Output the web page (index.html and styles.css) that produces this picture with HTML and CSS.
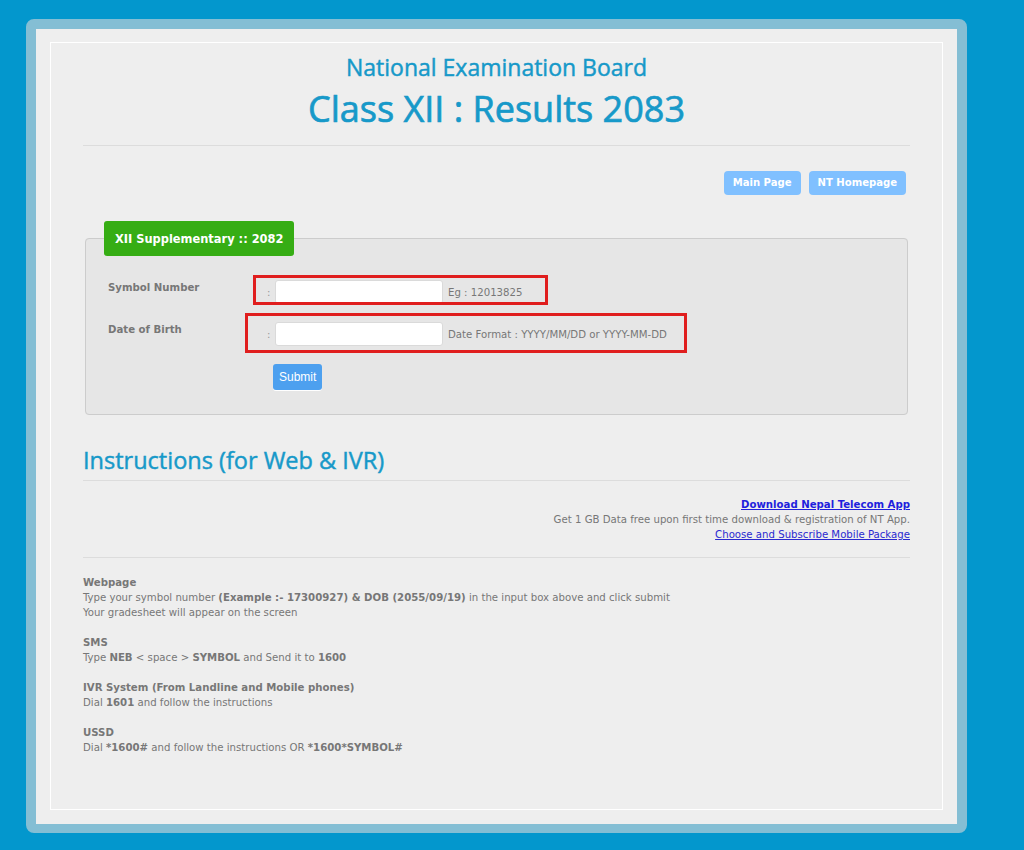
FILE: index.html
```html
<!DOCTYPE html>
<html lang="en">
<head>
<meta charset="utf-8">
<title>NEB Class XII Results 2083</title>
<link rel="stylesheet" href="styles.css">
</head>
<body>
<div class="frame">
  <div class="panel">
    <div class="sheet">
      <header class="masthead">
        <h2 class="masthead__org">National Examination Board</h2>
        <h1 class="masthead__title">Class XII : Results 2083</h1>
      </header>
      <hr class="rule rule--head">
      <nav class="links">
        <a class="pill" href="#">Main Page</a>
        <a class="pill" href="#">NT Homepage</a>
      </nav>
      <form class="search" onsubmit="return false">
        <fieldset class="search__box">
          <legend class="search__legend">XII Supplementary :: 2082</legend>
          <div class="field field--first">
            <label class="field__label" for="symbol">Symbol Number</label>
            <span class="field__colon">:</span>
            <input class="field__input" id="symbol" type="text">
            <span class="field__hint">Eg : 12013825</span>
            <span class="mark mark--symbol"></span>
          </div>
          <div class="field">
            <label class="field__label" for="dob">Date of Birth</label>
            <span class="field__colon">:</span>
            <input class="field__input" id="dob" type="text">
            <span class="field__hint">Date Format : YYYY/MM/DD or YYYY-MM-DD</span>
            <span class="mark mark--dob"></span>
          </div>
          <button class="submit" type="submit">Submit</button>
        </fieldset>
      </form>
      <h3 class="section-title">Instructions (for Web &amp; IVR)</h3>
      <hr class="rule rule--section">
      <div class="promo">
        <a class="promo__app" href="#">Download Nepal Telecom App</a><br>
        Get 1 GB Data free upon first time download &amp; registration of NT App.<br>
        <a class="promo__link" href="#">Choose and Subscribe Mobile Package</a>
      </div>
      <hr class="rule rule--promo">
      <div class="guide">
        <p><b>Webpage</b><br>Type your symbol number <b>(Example :- 17300927) &amp; DOB (2055/09/19)</b> in the input box above and click submit<br>Your gradesheet will appear on the screen</p>
        <p><b>SMS</b><br>Type <b>NEB</b> &lt; space &gt; <b>SYMBOL</b> and Send it to <b>1600</b></p>
        <p><b>IVR System (From Landline and Mobile phones)</b><br>Dial <b>1601</b> and follow the instructions</p>
        <p><b>USSD</b><br>Dial <b>*1600#</b> and follow the instructions OR <b>*1600*SYMBOL#</b></p>
      </div>
    </div>
  </div>
</div>
</body>
</html>
```

FILE: styles.css
```css
html, body {
  margin: 0;
  padding: 0;
}

body {
  background: #0397cd;
  padding: 19px 0 0 26px;
  font-family: "DejaVu Sans Condensed", "DejaVu Sans", sans-serif;
  font-size: 11.3px;
  color: #777777;
}

.frame {
  width: 921px;
  border: 10px solid #84bed4;
  border-bottom-width: 9px;
  border-radius: 8px;
}

.panel {
  background: #eeeeee;
  padding: 13px 14px 14px;
}

.sheet {
  box-sizing: border-box;
  height: 768px;
  border: 1px solid #ffffff;
  padding: 0 32px;
}

.masthead {
  padding-top: 9px;
  text-align: center;
  color: #1799c9;
  font-family: "Open Sans", Lato, sans-serif;
}

.masthead__org {
  margin: 0;
  font-size: 23px;
  line-height: 30px;
  font-weight: 400;
  -webkit-text-stroke: 0.45px #1799c9;
}

.masthead__title {
  margin: 5px 0 0;
  font-size: 36px;
  line-height: 44px;
  font-weight: 400;
  -webkit-text-stroke: 0.7px #1799c9;
}

.rule {
  height: 0;
  border: 0;
  border-top: 1px solid #dcdcdc;
  margin: 0;
}

.rule--head { margin-top: 14px; }
.rule--section { margin-top: 5px; }
.rule--promo { margin-top: 15px; }

.links {
  margin-top: 25px;
  padding-right: 4px;
  display: flex;
  justify-content: flex-end;
  gap: 8px;
}

.pill {
  display: block;
  height: 24px;
  line-height: 24px;
  padding: 0 9px;
  background: #80c0ff;
  border-radius: 4px;
  color: #ffffff;
  font-weight: bold;
  font-size: 11.2px;
  text-decoration: none;
}

.search {
  margin: 26px 2px 0;
}

.search__box {
  margin: 0;
  padding: 0 18px 24px;
  border: 1px solid #cccccc;
  border-radius: 4px;
  background: #e6e6e6;
  min-width: 0;
}

.search__legend {
  padding: 0 11px;
  height: 35px;
  line-height: 35px;
  background: #36ad14;
  border-radius: 3px;
  color: #ffffff;
  font-weight: bold;
  font-size: 12.7px;
}

.field {
  position: relative;
  display: flex;
  align-items: center;
  height: 24px;
  margin-top: 18px;
  padding-left: 4px;
}

.field--first {
  margin-top: 24px;
}

.field__label {
  align-self: flex-start;
  width: 159px;
  line-height: 16px;
  font-weight: bold;
  color: #777777;
}

.field__colon {
  width: 8px;
  color: #999999;
}

.field__input {
  box-sizing: border-box;
  width: 168px;
  height: 24px;
  margin: 0;
  border: 1px solid #dadada;
  border-radius: 3px;
  background: #ffffff;
  padding: 2px 4px;
}

.field__hint {
  margin-left: 5px;
  color: #777777;
}

.mark {
  position: absolute;
  box-sizing: border-box;
  border: 3px solid #e01e1e;
  pointer-events: none;
}

.mark--symbol {
  left: 149px;
  top: -5px;
  width: 295px;
  height: 30px;
}

.mark--dob {
  left: 141px;
  top: -9px;
  width: 442px;
  height: 40px;
}

.submit {
  display: block;
  margin: 18px 0 0 169px;
  height: 26px;
  padding: 0 6px;
  border: 0;
  border-radius: 3px;
  background: #4da0ef;
  color: #ffffff;
  font-family: "Liberation Sans", Arial, sans-serif;
  font-size: 12px;
  box-shadow: 0 1px 0 #ffffff;
}

.section-title {
  margin: 30px 0 0;
  font-family: "Open Sans", Lato, sans-serif;
  font-size: 23.5px;
  line-height: 30px;
  font-weight: 400;
  color: #1799c9;
  -webkit-text-stroke: 0.45px #1799c9;
}

.promo {
  margin-top: 16px;
  text-align: right;
  line-height: 15px;
}

.promo__app {
  color: #1f1fdd;
  font-weight: bold;
}

.promo__link {
  color: #2a2ad0;
}

.guide {
  margin-top: 17px;
  line-height: 15px;
}

.guide p {
  margin: 0 0 15px;
}
```
